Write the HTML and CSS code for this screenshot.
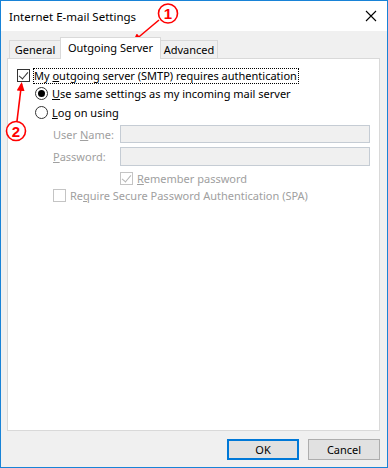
FILE: index.html
```html
<!DOCTYPE html>
<html lang="en">
<head>
    <meta charset="UTF-8">
    <title>Internet E-mail Settings</title>
    <link rel="stylesheet" href="styles.css">
</head>
<body>
    <div class="window">
        <div class="titlebar">
            <span class="title">Internet E-mail Settings</span>
            <svg class="close" width="12" height="12" viewBox="0 0 12 12">
                <path d="M1 1 L11 11 M11 1 L1 11" stroke="#000" stroke-width="1.1"/>
            </svg>
        </div>

        <div class="content">
            <div class="tabs">
                <div class="tab general">General</div>
                <div class="tab active">Outgoing Server</div>
                <div class="tab advanced">Advanced</div>
            </div>

            <div class="panel">
                <div class="row auth">
                    <span class="check on"></span>
                    <span class="label focus">My <u>o</u>utgoing server (SMTP) requires authentication</span>
                </div>
                <div class="group">
                    <div class="row same">
                        <span class="radio on"></span>
                        <span class="label"><u>U</u>se same settings as my incoming mail server</span>
                    </div>
                    <div class="row logon">
                        <span class="radio"></span>
                        <span class="label"><u>L</u>og on using</span>
                    </div>
                    <div class="fields">
                        <div class="field user">
                            <span class="field-label">User <u>N</u>ame:</span>
                            <span class="input"></span>
                        </div>
                        <div class="field pass">
                            <span class="field-label"><u>P</u>assword:</span>
                            <span class="input"></span>
                        </div>
                        <div class="row remember">
                            <span class="check on disabled"></span>
                            <span class="label disabled"><u>R</u>emember password</span>
                        </div>
                        <div class="row spa">
                            <span class="check disabled"></span>
                            <span class="label disabled">Re<u>q</u>uire Secure Password Authentication (SPA)</span>
                        </div>
                    </div>
                </div>
            </div>

            <div class="buttons">
                <button class="btn default">OK</button>
                <button class="btn">Cancel</button>
            </div>
        </div>

        <svg class="marks" width="388" height="468" viewBox="0 0 388 468">
            <defs>
                <marker id="head" markerWidth="9" markerHeight="8" refX="7" refY="4" orient="auto" markerUnits="userSpaceOnUse">
                    <path d="M0 0 L9 4 L0 8 Z" fill="#f00"/>
                </marker>
            </defs>
            <line x1="159" y1="20" x2="134" y2="41" stroke="#f00" stroke-width="1.6" marker-end="url(#head)"/>
            <circle cx="168" cy="13.5" r="9.5" fill="#fff" stroke="#f00" stroke-width="1.6"/>
            <text x="168" y="19" class="num">1</text>
            <line x1="17" y1="121" x2="21.5" y2="84" stroke="#f00" stroke-width="1.6" marker-end="url(#head)"/>
            <circle cx="16" cy="131" r="9.5" fill="#fff" stroke="#f00" stroke-width="1.6"/>
            <text x="16" y="136.5" class="num">2</text>
        </svg>
    </div>
</body>
</html>
```

FILE: styles.css
```css
:root {
    --frame: #1883d7;
    --face: #f0f0f0;
    --line: #d9d9d9;
    --text: #000000;
    --muted: #a0a0a0;
}

* {
    margin: 0;
    padding: 0;
    box-sizing: border-box;
}

body {
    font-family: "Noto Sans", sans-serif;
    font-size: 11px;
    color: var(--text);
    background: #ffffff;
}

.window {
    position: relative;
    width: 388px;
    height: 468px;
    border: 1px solid var(--frame);
    background: var(--face);
    display: flex;
    flex-direction: column;
}

.titlebar {
    height: 30px;
    background: #ffffff;
    display: flex;
    align-items: center;
    justify-content: space-between;
    padding: 0 10px 0 8px;
}

.title {
    font-size: 11.5px;
}

.content {
    padding: 6px 7px 0 6px;
    display: flex;
    flex-direction: column;
}

.tabs {
    display: flex;
    align-items: flex-end;
    height: 21px;
    padding-left: 2px;
    position: relative;
    z-index: 1;
}

.tab {
    height: 18px;
    line-height: 17px;
    text-align: center;
    border: 1px solid var(--line);
    border-bottom: none;
    background: var(--face);
}

.tab.general {
    width: 52px;
}

.tab.advanced {
    width: 58px;
}

.tab.active {
    width: 101px;
    height: 22px;
    line-height: 19px;
    background: #ffffff;
    margin: 0 -1px -1px;
    position: relative;
}

.panel {
    height: 373px;
    background: #ffffff;
    border: 1px solid var(--line);
    padding: 10px 9px 0 9px;
}

.row {
    display: flex;
    align-items: center;
    height: 13px;
    gap: 4px;
}

.label {
    white-space: nowrap;
}

.label.focus {
    outline: 1px dotted #000;
    line-height: 14px;
    padding-right: 1px;
}

.group {
    padding-left: 18px;
    display: flex;
    flex-direction: column;
}

.row.same {
    margin-top: 5px;
}

.row.logon {
    margin-top: 6px;
}

.check {
    width: 13px;
    height: 13px;
    border: 1px solid #333333;
    background: #ffffff;
    flex: none;
    position: relative;
}

.check.on::after {
    content: "";
    position: absolute;
    left: 3px;
    top: 0;
    width: 4px;
    height: 8px;
    border: solid #333333;
    border-width: 0 1px 1px 0;
    transform: rotate(40deg);
}

.check.disabled {
    border-color: #c4c4c4;
}

.check.disabled.on::after {
    border-color: #b4b4b4;
}

.radio {
    width: 13px;
    height: 13px;
    border: 1px solid #333333;
    border-radius: 50%;
    background: #ffffff;
    flex: none;
    position: relative;
}

.radio.on::after {
    content: "";
    position: absolute;
    left: 2px;
    top: 2px;
    width: 7px;
    height: 7px;
    border-radius: 50%;
    background: #000000;
}

.label.disabled,
.field-label {
    color: var(--muted);
}

.fields {
    padding-left: 18px;
    display: flex;
    flex-direction: column;
}

.field {
    display: flex;
    align-items: center;
}

.field.user {
    height: 18px;
    margin-top: 6px;
}

.field.pass {
    height: 19px;
    margin-top: 4px;
}

.field-label {
    width: 67px;
}

.input {
    width: 251px;
    height: 100%;
    background: #f0f0f0;
    border: 1px solid #c5ccd4;
}

.row.remember {
    padding-left: 67px;
    margin-top: 6px;
}

.row.spa {
    margin-top: 4px;
}

.buttons {
    display: flex;
    justify-content: flex-end;
    gap: 9px;
    padding-top: 8px;
}

.btn {
    width: 72px;
    height: 21px;
    font-family: inherit;
    font-size: 11px;
    background: #e1e1e1;
    border: 1px solid #adadad;
    color: var(--text);
}

.btn.default {
    border: 2px solid #0078d7;
}

.marks {
    position: absolute;
    left: -1px;
    top: -1px;
    pointer-events: none;
}

.num {
    font-family: "Liberation Sans", sans-serif;
    font-weight: bold;
    font-size: 15px;
    fill: #f00;
    text-anchor: middle;
}
```
